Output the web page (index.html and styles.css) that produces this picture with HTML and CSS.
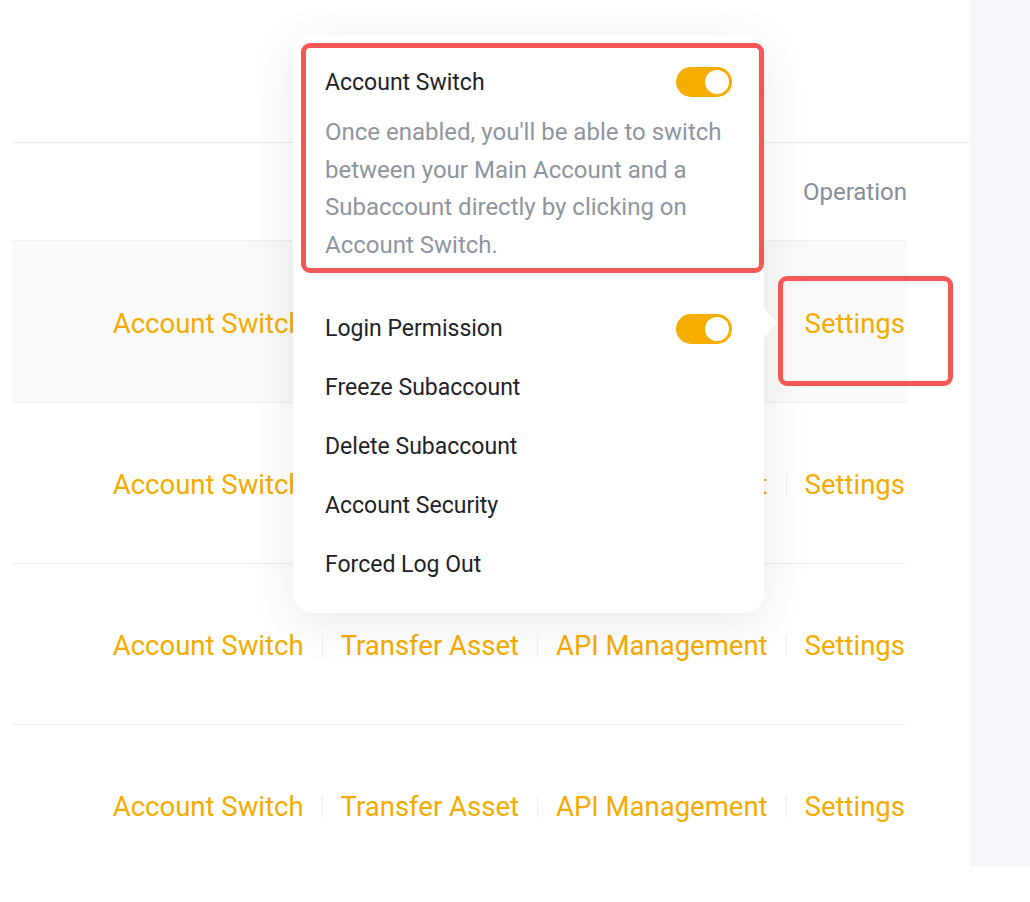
FILE: index.html
```html
<!DOCTYPE html>
<html lang="en">
<head>
    <meta charset="UTF-8">
    <meta name="viewport" content="width=device-width, initial-scale=1.0">
    <title>Subaccounts</title>
    <link rel="stylesheet" href="styles.css">
</head>
<body>
    <div class="page">
        <div class="main">
            <div class="panel">
                <div class="thead">Operation</div>

                <div class="row row-active">
                    <a class="op">Account Switch</a><span class="sep"></span>
                    <a class="op">Transfer Asset</a><span class="sep"></span>
                    <a class="op">API Management</a><span class="sep sep-hidden"></span>
                    <a class="op">Settings</a>
                </div>
                <div class="row">
                    <a class="op">Account Switch</a><span class="sep"></span>
                    <a class="op">Transfer Asset</a><span class="sep"></span>
                    <a class="op">API Management</a><span class="sep"></span>
                    <a class="op">Settings</a>
                </div>
                <div class="row">
                    <a class="op">Account Switch</a><span class="sep"></span>
                    <a class="op">Transfer Asset</a><span class="sep"></span>
                    <a class="op">API Management</a><span class="sep"></span>
                    <a class="op">Settings</a>
                </div>
                <div class="row">
                    <a class="op">Account Switch</a><span class="sep"></span>
                    <a class="op">Transfer Asset</a><span class="sep"></span>
                    <a class="op">API Management</a><span class="sep"></span>
                    <a class="op">Settings</a>
                </div>
            </div>

            <!-- settings dropdown -->
            <div class="popover">
                <div class="pop-head">
                    <span>Account Switch</span>
                    <span class="toggle on"></span>
                </div>
                <p class="pop-desc">Once enabled, you'll be able to switch between your Main Account and a Subaccount directly by clicking on Account Switch.</p>

                <ul class="pop-menu">
                    <li>
                        <span>Login Permission</span>
                        <span class="toggle on"></span>
                    </li>
                    <li>Freeze Subaccount</li>
                    <li>Delete Subaccount</li>
                    <li>Account Security</li>
                    <li>Forced Log Out</li>
                </ul>
            </div>

            <!-- highlight marks -->
            <div class="mark mark-switch"></div>
            <div class="mark mark-settings"></div>
        </div>
        <div class="side"></div>
    </div>
</body>
</html>
```

FILE: styles.css
```css
body {
    margin: 0;
    font-family: Roboto, "Liberation Sans", sans-serif;
    background: #fff;
    color: #1e2329;
}

.page {
    display: flex;
    align-items: flex-start;
}

.main {
    position: relative;
    width: 970px;
    padding-top: 142px;
}

.side {
    flex: 1;
    height: 866px;
    background: #f5f6fa;
}

.panel {
    margin-left: 12px;
    border-top: 1px solid #e9edf3;
}

.thead {
    width: 895px;
    height: 97px;
    display: flex;
    align-items: center;
    justify-content: flex-end;
    font-size: 24px;
    color: #868d99;
}

.row {
    width: 893px;
    height: 157px;
    padding: 3px 2px 0 0;
    border-top: 1px solid #eeeff2;
    display: flex;
    align-items: center;
    justify-content: flex-end;
    font-size: 27.5px;
}
.row-active {
    height: 158px;
    background: #fafafa;
}

.op {
    color: #f4ab00;
    cursor: pointer;
}

.sep {
    width: 1px;
    height: 22px;
    margin: 0 18px;
    background: #eceef1;
}
.sep-hidden {
    background: transparent;
}

/* popover */
.popover {
    position: absolute;
    left: 293px;
    top: 35px;
    width: 407px;
    height: 550px;
    padding: 28px 32px 0;
    background: #fff;
    border-radius: 20px;
    box-shadow: 0 10px 50px rgba(0, 0, 0, 0.09);
    font-size: 23px;
}
.popover::after {
    content: "";
    position: absolute;
    right: -13px;
    top: 273px;
    width: 13px;
    height: 30px;
    background: #fff;
    clip-path: polygon(0 0, 100% 50%, 0 100%);
}

.pop-head {
    display: flex;
    align-items: center;
    justify-content: space-between;
    height: 38px;
}

.pop-desc {
    margin: 13px 0 0;
    font-size: 24px;
    line-height: 37.5px;
    color: #8e959f;
}

.pop-menu {
    list-style: none;
    margin: 35px 0 0;
    padding: 0;
}
.pop-menu li {
    height: 59px;
    display: flex;
    align-items: center;
    justify-content: space-between;
}

.toggle {
    position: relative;
    width: 56px;
    height: 30px;
    border-radius: 15px;
    background: #e6e8ea;
}
.toggle.on {
    background: #f5ae00;
}
.toggle::after {
    content: "";
    position: absolute;
    top: 3px;
    left: 3px;
    width: 24px;
    height: 24px;
    border-radius: 50%;
    background: #fff;
}
.toggle.on::after {
    left: auto;
    right: 3px;
}

/* red annotation boxes */
.mark {
    position: absolute;
    border: 5px solid #f35855;
    border-radius: 9px;
}
.mark-switch {
    left: 301px;
    top: 43px;
    width: 453px;
    height: 220px;
}
.mark-settings {
    left: 778px;
    top: 276px;
    width: 165px;
    height: 100px;
}
```
